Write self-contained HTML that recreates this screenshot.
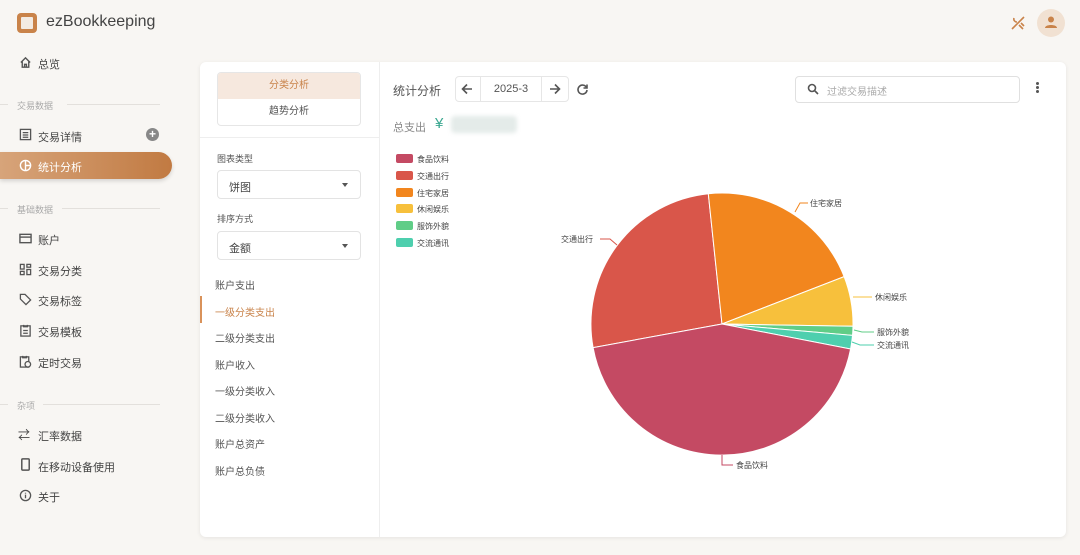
<!DOCTYPE html>
<html><head><meta charset="utf-8"><style>
*{box-sizing:border-box;margin:0;padding:0}
body{width:1080px;height:555px;background:#f8f6f3;font-family:"Liberation Sans","Noto Sans CJK SC",sans-serif;position:relative;overflow:hidden;color:#555}
.a{position:absolute}
.nav{font-size:11px;color:#444}
.sec{font-size:9px;color:#aaa}
.ico{position:absolute;left:19px;width:13px;height:13px}
.card{left:200px;top:62px;width:866px;height:475px;background:#fff;border-radius:6px;box-shadow:0 1px 4px rgba(0,0,0,.08)}
.li{left:215px;font-size:10px;color:#555}
</style></head><body>
<div class="a" style="left:17px;top:13px;width:20px;height:20px;border-radius:4px;background:#c9834a"><div class="a" style="left:4px;top:4px;width:12px;height:12px;background:#f3ebe3;border-radius:1px"></div></div>
<div class="a" style="left:46px;top:13px;font-size:16px;color:#444">ezBookkeeping</div>
<svg class="a" style="left:1010px;top:15px" width="16" height="16" viewBox="0 0 16 16" stroke="#c9834a" stroke-width="1.6" fill="none"><line x1="2" y1="14" x2="14" y2="2"/><path d="M4 3a3 3 0 0 0 3 4"/><path d="M9 10l4 4M11 8l3 3"/></svg>
<div class="a" style="left:1037px;top:9px;width:28px;height:28px;border-radius:50%;background:#f1e1d2"></div>
<svg class="a" style="left:1044px;top:15px" width="14" height="14" viewBox="0 0 14 14" fill="#c9834a"><circle cx="7" cy="4.5" r="3"/><path d="M1 13c0-4 12-4 12 0z"/></svg>

<svg class="ico" style="top:56px" viewBox="0 0 14 14" fill="none" stroke="#555" stroke-width="1.5"><path d="M2 7l5-5 5 5M3.5 6v6h7V6M6 12V9h2v3"/></svg>
<div class="a nav" style="left:38px;top:56px">总览</div>
<div class="a sec" style="left:17px;top:99px">交易数据</div><div class="a" style="left:67px;top:104px;width:93px;height:1px;background:#e3e0dc"></div><div class="a" style="left:0;top:104px;width:8px;height:1px;background:#e3e0dc"></div>
<svg class="ico" style="top:128px" viewBox="0 0 14 14" fill="none" stroke="#555" stroke-width="1.4"><rect x="1.5" y="1.5" width="11" height="11"/><path d="M4 5h6M4 7.5h6M4 10h6"/></svg>
<div class="a nav" style="left:38px;top:129px">交易详情</div>
<div class="a" style="left:146px;top:128px;width:13px;height:13px;border-radius:50%;background:#888;color:#fff;font-size:12px;line-height:13px;text-align:center;font-weight:bold">+</div>
<div class="a" style="left:0;top:152px;width:172px;height:27px;border-radius:0 14px 14px 0;background:linear-gradient(90deg,#d7a47a,#c17a42);box-shadow:0 2px 4px rgba(0,0,0,.15)"></div>
<svg class="ico" style="top:159px" viewBox="0 0 14 14" fill="none" stroke="#fff" stroke-width="1.5"><circle cx="7" cy="7" r="5.5"/><path d="M7 1.5v11M7 7h5.5"/></svg>
<div class="a nav" style="left:38px;top:159px;color:#fff">统计分析</div>
<div class="a sec" style="left:17px;top:203px">基础数据</div><div class="a" style="left:62px;top:208px;width:98px;height:1px;background:#e3e0dc"></div><div class="a" style="left:0;top:208px;width:8px;height:1px;background:#e3e0dc"></div>
<svg class="ico" style="top:232px" viewBox="0 0 14 14" fill="none" stroke="#555" stroke-width="1.5"><rect x="1" y="2.5" width="12" height="9"/><path d="M1 5.5h12"/></svg>
<div class="a nav" style="left:38px;top:232px">账户</div>
<svg class="ico" style="top:263px" viewBox="0 0 14 14" fill="none" stroke="#555" stroke-width="1.4"><rect x="1.5" y="1.5" width="4" height="5"/><rect x="8.5" y="1.5" width="4" height="3"/><rect x="1.5" y="9" width="4" height="3.5"/><rect x="8.5" y="7" width="4" height="5.5"/></svg>
<div class="a nav" style="left:38px;top:263px">交易分类</div>
<svg class="ico" style="top:293px" viewBox="0 0 14 14" fill="none" stroke="#555" stroke-width="1.4"><path d="M1.5 1.5h5l6 6-5 5-6-6z"/></svg>
<div class="a nav" style="left:38px;top:293px">交易标签</div>
<svg class="ico" style="top:324px" viewBox="0 0 14 14" fill="none" stroke="#555" stroke-width="1.4"><rect x="2" y="2" width="10" height="11"/><path d="M5 1v2h4V1M4.5 7h5M4.5 10h5"/></svg>
<div class="a nav" style="left:38px;top:324px">交易模板</div>
<svg class="ico" style="top:355px" viewBox="0 0 14 14" fill="none" stroke="#555" stroke-width="1.4"><rect x="1.5" y="2" width="9" height="11"/><circle cx="9.5" cy="10" r="3" fill="#f8f6f3"/><path d="M4 1v2h4V1"/></svg>
<div class="a nav" style="left:38px;top:355px">定时交易</div>
<div class="a sec" style="left:17px;top:399px">杂项</div><div class="a" style="left:43px;top:404px;width:117px;height:1px;background:#e3e0dc"></div><div class="a" style="left:0;top:404px;width:8px;height:1px;background:#e3e0dc"></div>
<div class="a nav" style="left:18px;top:426px;font-size:12px">⇄</div>
<div class="a nav" style="left:38px;top:428px">汇率数据</div>
<svg class="ico" style="top:458px" viewBox="0 0 14 14" fill="none" stroke="#555" stroke-width="1.6"><rect x="3" y="1" width="8" height="12" rx="1"/></svg>
<div class="a nav" style="left:38px;top:459px">在移动设备使用</div>
<svg class="ico" style="top:489px" viewBox="0 0 14 14" fill="none" stroke="#555" stroke-width="1.4"><circle cx="7" cy="7" r="5.5"/><path d="M7 6v4M7 4v1"/></svg>
<div class="a nav" style="left:38px;top:489px">关于</div>

<div class="a card"></div>
<div class="a" style="left:379px;top:62px;width:1px;height:475px;background:#eee"></div>
<div class="a" style="left:200px;top:137px;width:179px;height:1px;background:#eee"></div>
<div class="a" style="left:217px;top:72px;width:144px;height:54px;border:1px solid #e6e6e6;border-radius:4px"></div>
<div class="a" style="left:218px;top:73px;width:142px;height:26px;background:#f6e8de;border-radius:3px 3px 0 0;color:#c9834a;font-size:10px;text-align:center;line-height:26px">分类分析</div>
<div class="a" style="left:218px;top:99px;width:142px;height:26px;color:#555;font-size:10px;text-align:center;line-height:26px">趋势分析</div>
<div class="a" style="left:217px;top:152px;font-size:9px;color:#555">图表类型</div>
<div class="a" style="left:217px;top:170px;width:144px;height:29px;border:1px solid #e3e3e3;border-radius:4px;font-size:11px;color:#444;padding:8px 0 0 11px">饼图<span class="a" style="right:12px;top:12px;border:3.5px solid transparent;border-top:4px solid #555"></span></div>
<div class="a" style="left:217px;top:212px;font-size:9px;color:#555">排序方式</div>
<div class="a" style="left:217px;top:231px;width:144px;height:29px;border:1px solid #e3e3e3;border-radius:4px;font-size:11px;color:#444;padding:8px 0 0 11px">金额<span class="a" style="right:12px;top:12px;border:3.5px solid transparent;border-top:4px solid #555"></span></div>
<div class="a li" style="top:277px">账户支出</div>
<div class="a" style="left:200px;top:296px;width:2px;height:27px;background:#d9925a"></div>
<div class="a li" style="top:304px;color:#c9834a">一级分类支出</div>
<div class="a li" style="top:330px">二级分类支出</div>
<div class="a li" style="top:357px">账户收入</div>
<div class="a li" style="top:383px">一级分类收入</div>
<div class="a li" style="top:410px">二级分类收入</div>
<div class="a li" style="top:436px">账户总资产</div>
<div class="a li" style="top:463px">账户总负债</div>

<div class="a" style="left:393px;top:82px;font-size:12px;color:#555">统计分析</div>
<div class="a" style="left:455px;top:76px;width:114px;height:26px;border:1px solid #e6e6e6;border-radius:4px"></div>
<div class="a" style="left:480px;top:76px;width:1px;height:26px;background:#e6e6e6"></div>
<div class="a" style="left:541px;top:76px;width:1px;height:26px;background:#e6e6e6"></div>
<svg class="a" style="left:461px;top:83px" width="12" height="12" viewBox="0 0 12 12" fill="none" stroke="#555" stroke-width="1.6"><path d="M11 6H1.5M6 1.5L1.5 6 6 10.5"/></svg>
<div class="a" style="left:481px;top:83px;width:60px;text-align:center;font-size:11px;color:#555">2025-3</div>
<svg class="a" style="left:549px;top:83px" width="12" height="12" viewBox="0 0 12 12" fill="none" stroke="#555" stroke-width="1.6"><path d="M1 6h9.5M6 1.5L10.5 6 6 10.5"/></svg>
<svg class="a" style="left:576px;top:83px" width="13" height="13" viewBox="0 0 13 13" fill="none" stroke="#555" stroke-width="1.6"><path d="M10.5 4.5A4.5 4.5 0 1 0 11 7"/><path d="M11 1.5v3.5H7.5" /></svg>
<div class="a" style="left:393px;top:119px;font-size:11px;color:#888">总支出</div>
<div class="a" style="left:435px;top:115px;font-size:15px;color:#3aa78f">¥</div>
<div class="a" style="left:451px;top:116px;width:66px;height:17px;background:#e4ebe9;border-radius:4px;filter:blur(2px)"></div>
<div class="a" style="left:795px;top:76px;width:225px;height:27px;border:1px solid #e0e0e0;border-radius:4px"></div>
<svg class="a" style="left:807px;top:83px" width="12" height="12" viewBox="0 0 12 12" fill="none" stroke="#555" stroke-width="1.6"><circle cx="5" cy="5" r="3.5"/><path d="M7.5 7.5L11 11"/></svg>
<div class="a" style="left:827px;top:83px;font-size:10px;color:#aaa">过滤交易描述</div>
<div class="a" style="left:1036px;top:82px;width:3px;height:3px;border-radius:50%;background:#555;box-shadow:0 4px 0 #555,0 8px 0 #555"></div>

<div class="a" style="left:396px;top:152px;font-size:8px;color:#444;line-height:16.8px">
<div><span style="display:inline-block;width:17px;height:9px;background:#c44a63;border-radius:2px;vertical-align:-1px;margin-right:4px"></span>食品饮料</div>
<div><span style="display:inline-block;width:17px;height:9px;background:#d9564a;border-radius:2px;vertical-align:-1px;margin-right:4px"></span>交通出行</div>
<div><span style="display:inline-block;width:17px;height:9px;background:#f2861e;border-radius:2px;vertical-align:-1px;margin-right:4px"></span>住宅家居</div>
<div><span style="display:inline-block;width:17px;height:9px;background:#f7c03c;border-radius:2px;vertical-align:-1px;margin-right:4px"></span>休闲娱乐</div>
<div><span style="display:inline-block;width:17px;height:9px;background:#60cd87;border-radius:2px;vertical-align:-1px;margin-right:4px"></span>服饰外貌</div>
<div><span style="display:inline-block;width:17px;height:9px;background:#4ecfae;border-radius:2px;vertical-align:-1px;margin-right:4px"></span>交流通讯</div>
</div>

<svg class="a" style="left:0;top:0" width="1080" height="555">
<g stroke="#fff" stroke-width="1">
<path d="M722 324L593.1 347.6A131 131 0 0 1 708.3 193.7Z" fill="#d9564a"/>
<path d="M722 324L708.3 193.7A131 131 0 0 1 844.1 276.6Z" fill="#f2861e"/>
<path d="M722 324L844.1 276.6A131 131 0 0 1 853 326.3Z" fill="#f7c03c"/>
<path d="M722 324L853 326.3A131 131 0 0 1 852.5 335.4Z" fill="#60cd87"/>
<path d="M722 324L852.5 335.4A131 131 0 0 1 850.6 349Z" fill="#4ecfae"/>
<path d="M722 324L850.6 349A131 131 0 0 1 593.1 347.6Z" fill="#c44a63"/>
</g>
<g fill="none" stroke-width="1">
<path d="M600 239H610L617 245" stroke="#d9564a"/>
<path d="M795 212L800 203H808" stroke="#f2861e"/>
<path d="M853 297H872" stroke="#f7c03c"/>
<path d="M854 330L862 332H874" stroke="#60cd87"/>
<path d="M852 342L860 345H874" stroke="#4ecfae"/>
<path d="M722 455V465H733" stroke="#c44a63"/>
</g>
<g font-size="8" fill="#444" font-family="Liberation Sans,Noto Sans CJK SC,sans-serif">
<text x="561" y="242">交通出行</text>
<text x="810" y="206">住宅家居</text>
<text x="875" y="300">休闲娱乐</text>
<text x="877" y="335">服饰外貌</text>
<text x="877" y="348">交流通讯</text>
<text x="736" y="468">食品饮料</text>
</g>
</svg>
</body></html>
